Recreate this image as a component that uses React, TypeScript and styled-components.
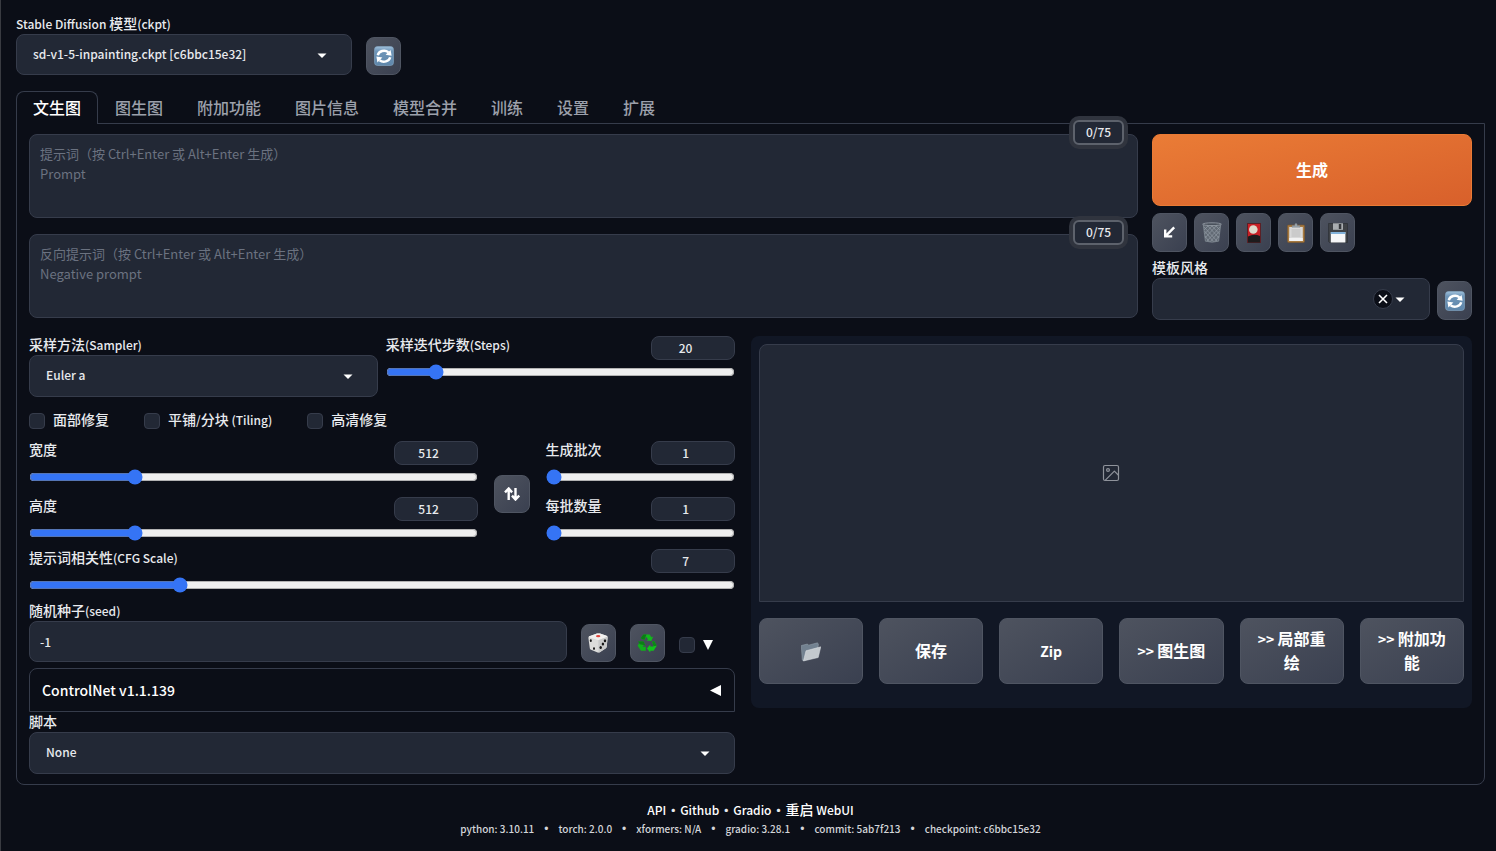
import React, { useId } from "react";
import styled, { createGlobalStyle, css } from "styled-components";

const c = {
  page: "#0b0e17",
  input: "#222835",
  border: "#363c4b",
  text: "#e8eaee",
  muted: "#6b7280",
  accent: "#3574f5",
};

const Global = createGlobalStyle`
  *, *::before, *::after { box-sizing: border-box; }
  body {
    margin: 0;
    min-height: 100vh;
    background: ${c.page};
    color: ${c.text};
    font: 500 14px/20px "Noto Sans CJK SC", sans-serif;
  }
  button, input, select, textarea { font: inherit; color: inherit; margin: 0; }
  #root { min-height: 100vh; border-left: 1px solid #393b41; }
`;

const Page = styled.div`
  display: flex;
  flex-direction: column;
  padding: 15px 11px 0 15px;
`;

const Latin = styled.span<{ $size: number }>`
  font-size: ${(p) => p.$size}px;
  line-height: 1;
`;

const Label = styled.label`
  display: block;
  font-size: 14px;
  line-height: 17px;
  padding-bottom: 2px;
  white-space: nowrap;
`;

const field = css`
  background: ${c.input};
  border: 1px solid ${c.border};
  border-radius: 8px;
  outline: none;
  font-size: 12px;
`;

const SelectBox = styled.div`
  position: relative;
  display: flex;
`;

const SelectInput = styled.select<{ $tall?: boolean }>`
  ${field}
  appearance: none;
  width: 100%;
  height: ${(p) => (p.$tall ? 42 : 41)}px;
  padding: 0 48px 2px 16px;
`;

const Caret = styled.svg`
  position: absolute;
  right: 21px;
  top: 12px;
  width: 18px;
  height: 18px;
  fill: #fff;
  pointer-events: none;
`;

const ClearButton = styled.button`
  position: absolute;
  right: 37px;
  top: 11px;
  width: 20px;
  height: 20px;
  padding: 0;
  display: grid;
  place-items: center;
  border: 1px solid ${c.border};
  border-radius: 50%;
  background: ${c.page};
`;

const secondary = css`
  border: 1px solid #4f5562;
  background: linear-gradient(to bottom right, #4e535f, #3a4050);
  color: #fff;
  border-radius: 8px;
`;

const ToolButton = styled.button<{ $h?: number }>`
  ${secondary}
  display: grid;
  place-items: center;
  flex: none;
  width: 35px;
  height: ${(p) => p.$h ?? 38}px;
  padding: 0;
`;

const SwapButton = styled(ToolButton)`
  width: 36px;
  margin-top: 6px;
`;

const TopBar = styled.div`
  display: flex;
  align-items: flex-end;
  gap: 14px;
`;

const ModelField = styled.div`
  width: 336px;
`;

const Tabs = styled.div`
  display: flex;
  margin-top: 16px;
  position: relative;
  z-index: 1;
  margin-bottom: -1px;
`;

const Tab = styled.button<{ $on?: boolean }>`
  height: 33px;
  padding: 0 16px 2px;
  font-size: 16px;
  line-height: 24px;
  border: 1px solid ${(p) => (p.$on ? c.border : "transparent")};
  border-bottom: 0;
  border-radius: 8px 8px 0 0;
  background: ${(p) => (p.$on ? c.page : "transparent")};
  color: ${(p) => (p.$on ? "#fff" : "#9ca0ab")};
`;

const Panel = styled.main`
  border: 1px solid ${c.border};
  border-radius: 0 0 8px 8px;
  padding: 10px 12px;
  display: flex;
  flex-direction: column;
  gap: 16px;
`;

const PromptRow = styled.div`
  display: flex;
  gap: 14px;
`;

const Prompts = styled.div`
  flex: 1;
  display: flex;
  flex-direction: column;
  gap: 16px;
`;

const PromptBox = styled.div`
  position: relative;
  display: flex;
`;

const PromptInput = styled.textarea`
  ${field}
  width: 100%;
  height: 84px;
  padding: 9px 10px;
  resize: none;
  font-size: 13px;
  font-weight: 400;
  &::placeholder { color: ${c.muted}; opacity: 1; }
`;

const Counter = styled.span`
  position: absolute;
  right: 14px;
  top: -14px;
  min-width: 51px;
  height: 25px;
  text-align: center;
  font-size: 12px;
  line-height: 20px;
  border: 2px solid #5d626c;
  border-radius: 6px;
  background: ${c.input};
  box-shadow: 0 0 0 4px #30343e;
`;

const Actions = styled.div`
  width: 320px;
  flex: none;
`;

const Generate = styled.button`
  width: 100%;
  height: 72px;
  padding: 0 0 2px;
  border: 1px solid #ea7b35;
  border-radius: 8px;
  background: linear-gradient(to bottom right, #ea7c36, #d8602b);
  color: #fff;
  font-size: 16px;
  font-weight: 700;
`;

const ToolRow = styled.div`
  display: flex;
  gap: 7px;
  margin: 7px 0;
`;

const StyleRow = styled.div`
  display: flex;
  align-items: flex-end;
  gap: 7px;
`;

const Grow = styled.div`
  flex: 1;
  min-width: 0;
`;

const Columns = styled.div`
  display: grid;
  grid-template-columns: minmax(0, 89fr) minmax(0, 91fr);
  gap: 16px;
  align-items: start;
`;

const Settings = styled.div`
  display: flex;
  flex-direction: column;
`;

const SamplerRow = styled.div`
  display: grid;
  grid-template-columns: 1fr 1fr;
  align-items: start;
  gap: 8px;
`;

const SliderBox = styled.div`
  display: grid;
  grid-template-columns: 1fr 84px;
`;

const NumberInput = styled.input`
  ${field}
  height: 24px;
  width: 84px;
  padding: 0 14px 1px 0;
  text-align: center;
  appearance: textfield;
  &::-webkit-inner-spin-button { display: none; }
`;

const Range = styled.input`
  grid-column: 1 / -1;
  width: 100%;
  height: 16px;
  margin: 4px 0 0;
  accent-color: ${c.accent};
`;

const SliderStack = styled.div`
  display: flex;
  flex-direction: column;
  gap: 12px;
`;

const Checks = styled.div`
  display: flex;
  gap: 35px;
  margin: 14px 0 10px;
`;

const CheckLabel = styled.label`
  display: flex;
  align-items: center;
  gap: 8px;
  height: 20px;
`;

const CheckText = styled.span`
  padding-bottom: 3px;
  line-height: 17px;
`;

const Check = styled.input`
  appearance: none;
  width: 16px;
  height: 16px;
  flex: none;
  border: 1px solid ${c.border};
  border-radius: 4px;
  background: ${c.input};
`;

const SizeRow = styled.div`
  display: grid;
  grid-template-columns: minmax(0, 1fr) 36px 189px;
  gap: 16px;
  align-items: center;
  margin-bottom: 8px;
`;

const SeedRow = styled.div`
  display: flex;
  align-items: flex-end;
  gap: 14px;
  margin: 9px 0 6px;
`;

const SeedInput = styled.input`
  ${field}
  width: 100%;
  height: 41px;
  padding: 0 10px 1px;
  display: block;
`;

const ExtraLabel = styled.label`
  display: flex;
  align-items: center;
  gap: 8px;
  height: 34px;
  width: 56px;
`;

const Accordion = styled.button`
  display: flex;
  align-items: center;
  justify-content: space-between;
  height: 44px;
  margin-bottom: 1px;
  padding: 0 13px 0 12px;
  border: 1px solid ${c.border};
  border-radius: 8px 8px 0 0;
  background: ${c.page};
  color: #fff;
  font-size: 14px;
`;

const Gallery = styled.section`
  background: #111725;
  border-radius: 8px;
  padding: 8px 8px 24px;
`;

const Preview = styled.div`
  height: 258px;
  border: 1px solid ${c.border};
  border-radius: 8px 8px 0 0;
  background: ${c.input};
  display: grid;
  place-items: center;
`;

const GalleryButtons = styled.div`
  display: grid;
  grid-template-columns: repeat(6, minmax(0, 1fr));
  gap: 16px;
  margin-top: 16px;
`;

const GalleryButton = styled.button`
  ${secondary}
  height: 66px;
  padding: 0 14px 2px;
  font-size: 16px;
  line-height: 24px;
  font-weight: 700;
  svg { vertical-align: middle; }
`;

const Footer = styled.footer`
  text-align: center;
  margin-top: 14px;
`;

const FooterLinks = styled.nav`
  display: flex;
  justify-content: center;
  a { color: #fff; text-decoration: none; }
`;

const Versions = styled.div`
  display: flex;
  justify-content: center;
  gap: 10px;
  font-size: 10px;
  color: #d3d5d9;
`;

const Bullet = styled.span`
  font-family: "Liberation Sans", sans-serif;
  font-size: 12px;
`;

const RefreshIcon = () => (
  <svg width="20" height="20" viewBox="0 0 20 20" aria-hidden="true">
    <defs>
      <linearGradient id="refreshBg" x1="0" y1="0" x2="0" y2="1">
        <stop offset="0" stopColor="#9fc0db" />
        <stop offset=".25" stopColor="#6e95b8" />
        <stop offset="1" stopColor="#5f87ab" />
      </linearGradient>
    </defs>
    <rect x=".5" y=".5" width="19" height="19" rx="3" fill="url(#refreshBg)" stroke="#87a9c6" strokeWidth=".6" />
    <g fill="none" stroke="#fff" strokeWidth="2.4">
      <path d="M3.800 9.200A6.400 5.600 0 0 1 14.400 6.200" />
      <path d="M16.200 11.200A6.400 5.600 0 0 1 5.600 14.200" />
    </g>
    <path d="M17.600 9.800 11.600 8.800 16.600 4z" fill="#fff" />
    <path d="M2.400 10.600 8.400 11.600 3.400 16.400z" fill="#fff" />
  </svg>
);

const ArrowIcon = () => (
  <svg width="15" height="14" viewBox="0 0 15 14" fill="none" stroke="#fff" strokeWidth="2.400" aria-hidden="true">
    <path d="M12.200 1.400 3.800 9.800M3.200 3.600V10.400h7" />
  </svg>
);

const TrashIcon = () => (
  <svg width="20" height="21" viewBox="0 0 20 21" aria-hidden="true">
    <path d="M1.2 2h17.6l-2.2 17.2q-6.600 2-13.200 0z" fill="#626a74" />
    <g stroke="#929ba5" strokeWidth=".7" fill="none">
      <path d="M2 5l13 14M2.500 9l9 10.500M5 3l12 13M9 3l8.500 9M13 3l5 5M3 14l4 5.500" />
      <path d="M18 5 5 19M17.500 9l-9 10.500M15 3 3 16M11 3 2.500 12M7 3 2 8M17 14l-4 5.500" />
      <path d="M1.200 2 3.400 19.200q6.600 2 13.200 0L18.800 2" stroke="#87909a" />
    </g>
    <ellipse cx="10" cy="2.200" rx="9.300" ry="1.400" fill="#4a515c" stroke="#9aa2ab" strokeWidth=".8" />
  </svg>
);

const CardIcon = () => (
  <svg width="14" height="20" viewBox="0 0 14 20" aria-hidden="true">
    <rect x=".5" y=".5" width="13" height="19" fill="#c92026" stroke="#5b2026" />
    <path d="M1 13.500q6-3 12-.500v6.500H1z" fill="#1d1b1c" />
    <circle cx="6.300" cy="6.500" r="4.300" fill="#ddd9cb" />
  </svg>
);

const ClipboardIcon = () => (
  <svg width="18" height="20" viewBox="0 0 18 20" aria-hidden="true">
    <rect x=".5" y="2" width="17" height="17.500" rx="1" fill="#a77a40" stroke="#80592b" strokeWidth=".6" />
    <path d="M2.200 4h13.600v14H2.200z" fill="#d9d9d9" />
    <path d="M2.200 15h13.600v3H2.200z" fill="#f2f2f2" />
    <rect x="4.500" y="6" width="9" height="8" fill="#cbcbcb" />
    <path d="M5 4.200V2.600h2.600Q7.800.3 9 .3t1.400 2.300H13v1.600z" fill="#9aa4ac" stroke="#69727a" strokeWidth=".4" />
  </svg>
);

const FloppyIcon = () => (
  <svg width="20" height="20" viewBox="0 0 20 20" aria-hidden="true">
    <path d="M.5.500h19v19H1.500l-1-1z" fill="#3f4246" stroke="#292c30" strokeWidth=".6" />
    <rect x="5" y=".3" width="10" height="6.500" fill="#a9adb0" />
    <rect x="10.800" y="1" width="2.500" height="5" fill="#35383c" />
    <rect x="2.800" y="9" width="14.600" height="10.500" fill="#f6f7f8" />
    <rect x="2.800" y="9" width="14.600" height="2" fill="#82b2da" />
  </svg>
);

const DiceIcon = () => (
  <svg width="20" height="20" viewBox="0 0 20 20" aria-hidden="true">
    <path d="M9 .4h3l6.500 2.400q1.400.6 1.200 2l-1 9q-.2 1.200-1.200 1.800l-5.500 3.600q-1.200.7-2.400.2L3 16.700q-1-.5-1.200-1.500L.4 5q-.1-1.300 1-1.800z" fill="#dcdcda" />
    <path d="M9 .4h3l6.500 2.400 1 .9-9.200 3.600L.6 4l.8-.8z" fill="#f1f1ef" />
    <path d="m10.300 7.300 9.300-3.600-.9 10.100q-.2 1.200-1.200 1.800l-6.900 4.200z" fill="#c9caca" />
    <ellipse cx="10.200" cy="3.200" rx="2.200" ry="1.100" fill="#e2473f" />
    <g fill="#161616">
      <ellipse cx="2.800" cy="7.700" rx="1" ry="1.400" />
      <ellipse cx="6" cy="15.600" rx="1" ry="1.400" />
      <ellipse cx="17" cy="7.700" rx="1.200" ry="1.500" />
      <ellipse cx="14.900" cy="11" rx="1.200" ry="1.500" />
      <ellipse cx="12.700" cy="14.600" rx="1.200" ry="1.500" />
    </g>
  </svg>
);

const RecycleIcon = () => (
  <svg width="20" height="20" viewBox="0 0 20 20" aria-hidden="true">
    <path d="M6.500 1.500h6.200l1.700 2.700 1.800-.8-1.900 4.700-5-.7 1.700-1-1.700-2.700-2 3.300L3.600 5.200z" fill="#12b81c" />
    <path d="m3.600 5.200 2.900-3.700h3L7.300 7z" fill="#0a7c14" />
    <path d="m15.200 8.800 1.900-.8 2.600 4.800-3.100 5h-3.300v1.800l-3.400-4 3.400-4.100v2h3.200z" fill="#12c21c" />
    <path d="m15.200 8.800 1.900-.8 2.600 4.800-3.100.5z" fill="#0b8616" />
    <path d="M1.200 8.400h5.200l2.100 4.400-1.700-.8-1 1.700h3v4.100H4l-3.400-5 1.700-3z" fill="#11ae1b" />
    <path d="M1.200 8.400h5.200l2.100 4.400-1.700-.8-4-.8z" fill="#0b7e15" />
  </svg>
);

const FolderIcon = () => (
  <svg width="20" height="20" viewBox="0 0 20 20" aria-hidden="true">
    <path d="M.3 3.500 6.500 2l1 1.200L16.500.8l.9 1.500L16 13 3 18.500l-1.700-.3z" fill="#728190" stroke="#9ba8b3" strokeWidth=".5" />
    <path d="m5 8.800 14.800-4-2.600 10.700L2.400 19z" fill="#c3c9ce" stroke="#e1e5e8" strokeWidth=".5" />
  </svg>
);

const SwapIcon = () => (
  <svg width="16" height="14" viewBox="0 0 16 14" fill="none" stroke="#fff" strokeWidth="2.400" aria-hidden="true">
    <path d="M4.700 13V1.800M1 5.400l3.700-3.900 3.400 3.900M11.500 1v11.200M8 8.600l3.500 3.900L15.200 8.600" />
  </svg>
);

const ImageIcon = () => (
  <svg width="18" height="18" viewBox="0 0 24 24" fill="none" stroke="#8f939b" strokeWidth="1.600" strokeLinecap="round" strokeLinejoin="round" aria-hidden="true">
    <rect x="2" y="2" width="20" height="20" rx="2" />
    <circle cx="8" cy="8" r="1.900" />
    <path d="m22 15-5.500-5.500L4.500 21.500" />
  </svg>
);

/* Latin runs are set two pixels smaller than the Chinese text beside them. */
function Mixed({ text, size = 12 }: { text: string; size?: number }) {
  return (
    <>
      {text.split(/([\x20-\x7e]+)/).filter(Boolean).map((run, i) =>
        /^[\x20-\x7e]/.test(run) ? <Latin key={i} $size={size}>{run}</Latin> : run
      )}
    </>
  );
}

function Dropdown(p: { label: string; value: string; tall?: boolean; clearable?: boolean }) {
  const id = useId();
  return (
    <>
      <Label htmlFor={id}><Mixed text={p.label} /></Label>
      <SelectBox>
        <SelectInput id={id} $tall={p.tall} defaultValue={p.value}>
          <option value={p.value}>{p.value}</option>
        </SelectInput>
        {p.clearable && (
          <ClearButton type="button" aria-label="Clear">
            <svg width="10" height="10" viewBox="0 0 10 10" stroke="#fff" strokeWidth="1.600">
              <path d="m1 1 8 8M9 1 1 9" />
            </svg>
          </ClearButton>
        )}
        <Caret viewBox="0 0 18 18" aria-hidden="true">
          <path d="M4.500 7.500 9 12l4.500-4.500z" />
        </Caret>
      </SelectBox>
    </>
  );
}

function Slider(p: { label: string; value: number; min: number; max: number }) {
  const id = useId();
  return (
    <SliderBox>
      <Label htmlFor={id}><Mixed text={p.label} /></Label>
      <NumberInput id={id} type="number" defaultValue={p.value} />
      <Range type="range" aria-label={p.label} min={p.min} max={p.max} defaultValue={p.value} />
    </SliderBox>
  );
}

const tabs = ["文生图", "图生图", "附加功能", "图片信息", "模型合并", "训练", "设置", "扩展"];

const prompts = [
  { name: "Prompt", hint: "提示词（按 Ctrl+Enter 或 Alt+Enter 生成）\nPrompt" },
  { name: "Negative prompt", hint: "反向提示词（按 Ctrl+Enter 或 Alt+Enter 生成）\nNegative prompt" },
];

const tools = [
  { name: "Read parameters", Icon: ArrowIcon },
  { name: "Clear prompt", Icon: TrashIcon },
  { name: "Extra networks", Icon: CardIcon },
  { name: "Apply style", Icon: ClipboardIcon },
  { name: "Save style", Icon: FloppyIcon },
];

const versions = ["python: 3.10.11", "torch: 2.0.0", "xformers: N/A", "gradio: 3.28.1", "commit: 5ab7f213", "checkpoint: c6bbc15e32"];
const links = ["API", "Github", "Gradio", "重启 WebUI"];

export default function App() {
  return (
    <>
      <Global />
      <Page>
        <TopBar>
          <ModelField>
            <Dropdown label="Stable Diffusion 模型(ckpt)" value="sd-v1-5-inpainting.ckpt [c6bbc15e32]" />
          </ModelField>
          <ToolButton type="button" aria-label="Refresh models"><RefreshIcon /></ToolButton>
        </TopBar>

        <Tabs role="tablist">
          {tabs.map((t, i) => (
            <Tab key={t} type="button" role="tab" aria-selected={i === 0} $on={i === 0}>{t}</Tab>
          ))}
        </Tabs>

        <Panel>
          <PromptRow>
            <Prompts>
              {prompts.map((p) => (
                <PromptBox key={p.name}>
                  <PromptInput aria-label={p.name} placeholder={p.hint} />
                  <Counter>0/75</Counter>
                </PromptBox>
              ))}
            </Prompts>
            <Actions>
              <Generate type="button">生成</Generate>
              <ToolRow>
                {tools.map(({ name, Icon }) => (
                  <ToolButton key={name} type="button" aria-label={name} $h={39}><Icon /></ToolButton>
                ))}
              </ToolRow>
              <StyleRow>
                <Grow><Dropdown label="模板风格" value="" tall clearable /></Grow>
                <ToolButton type="button" aria-label="Refresh styles" $h={39}><RefreshIcon /></ToolButton>
              </StyleRow>
            </Actions>
          </PromptRow>

          <Columns>
            <Settings>
              <SamplerRow>
                <div><Dropdown label="采样方法(Sampler)" value="Euler a" tall /></div>
                <Slider label="采样迭代步数(Steps)" value={20} min={1} max={150} />
              </SamplerRow>
              <Checks>
                {["面部修复", "平铺/分块 (Tiling)", "高清修复"].map((t) => (
                  <CheckLabel key={t}><Check type="checkbox" /><CheckText><Mixed text={t} /></CheckText></CheckLabel>
                ))}
              </Checks>
              <SizeRow>
                <SliderStack>
                  <Slider label="宽度" value={512} min={64} max={2048} />
                  <Slider label="高度" value={512} min={64} max={2048} />
                </SliderStack>
                <SwapButton type="button" aria-label="Swap width and height"><SwapIcon /></SwapButton>
                <SliderStack>
                  <Slider label="生成批次" value={1} min={1} max={100} />
                  <Slider label="每批数量" value={1} min={1} max={8} />
                </SliderStack>
              </SizeRow>
              <Slider label="提示词相关性(CFG Scale)" value={7} min={1} max={30} />
              <SeedRow>
                <Grow>
                  <Label htmlFor="seed"><Mixed text="随机种子(seed)" /></Label>
                  <SeedInput id="seed" defaultValue="-1" />
                </Grow>
                <ToolButton type="button" aria-label="Random seed"><DiceIcon /></ToolButton>
                <ToolButton type="button" aria-label="Reuse seed"><RecycleIcon /></ToolButton>
                <ExtraLabel>
                  <Check type="checkbox" aria-label="Extra" />
                  <svg width="10" height="10" viewBox="0 0 10 10" fill="#fff" aria-hidden="true"><path d="M0 0h10L5 10z" /></svg>
                </ExtraLabel>
              </SeedRow>
              <Accordion type="button">
                ControlNet v1.1.139
                <svg width="11" height="11" viewBox="0 0 11 11" fill="#fff" aria-hidden="true"><path d="M11 0v11L0 5.500z" /></svg>
              </Accordion>
              <Dropdown label="脚本" value="None" tall />
            </Settings>

            <Gallery>
              <Preview><ImageIcon /></Preview>
              <GalleryButtons>
                <GalleryButton type="button" aria-label="Open folder"><FolderIcon /></GalleryButton>
                {["保存", "Zip", ">> 图生图", ">> 局部重绘", ">> 附加功能"].map((t) => (
                  <GalleryButton key={t} type="button"><Mixed text={t} size={14} /></GalleryButton>
                ))}
              </GalleryButtons>
            </Gallery>
          </Columns>
        </Panel>

        <Footer>
          <FooterLinks>
            {links.map((l, i) => (
              <React.Fragment key={l}>
                {i > 0 && <span>·</span>}
                <a href="#"><Mixed text={l} /></a>
              </React.Fragment>
            ))}
          </FooterLinks>
          <Versions>
            {versions.map((v, i) => (
              <React.Fragment key={v}>
                {i > 0 && <Bullet>•</Bullet>}
                <span>{v}</span>
              </React.Fragment>
            ))}
          </Versions>
        </Footer>
      </Page>
    </>
  );
}
